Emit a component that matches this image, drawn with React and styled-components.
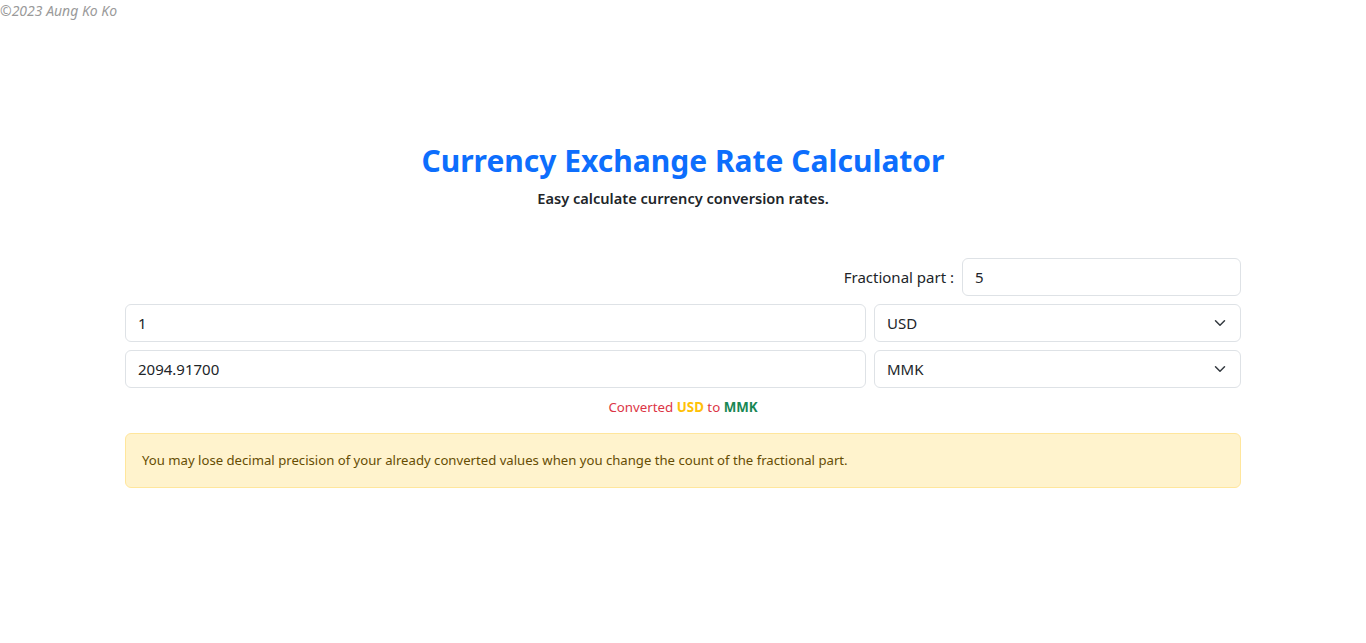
import React from "react";
import styled, { createGlobalStyle } from "styled-components";

const GlobalStyle = createGlobalStyle`
  * { box-sizing: border-box; }
  body {
    margin: 0;
    font-family: "Noto Sans", "Open Sans", sans-serif;
    color: #212529;
    background: #fff;
  }
`;

const Chevron = () => (
  <svg width="16" height="12" viewBox="0 0 16 16">
    <path
      d="M2 5l6 6 6-6"
      fill="none"
      stroke="#343a40"
      strokeWidth="2"
      strokeLinecap="round"
      strokeLinejoin="round"
    />
  </svg>
);

const App = () => {
  return (
    <Page>
      <GlobalStyle />
      <Copyright>©2023 Aung Ko Ko</Copyright>
      <Container>
        <Header>
          <Title>Currency Exchange Rate Calculator</Title>
          <Subtitle>Easy calculate currency conversion rates.</Subtitle>
        </Header>

        <Form>
          <FractionRow>
            <Label>Fractional part :</Label>
            <Field width="279px">5</Field>
          </FractionRow>
          <Row>
            <Field>1</Field>
            <Select>
              <span>USD</span>
              <Chevron />
            </Select>
          </Row>
          <Row>
            <Field>2094.91700</Field>
            <Select>
              <span>MMK</span>
              <Chevron />
            </Select>
          </Row>
        </Form>

        <Status>
          Converted <Code color="#ffc107">USD</Code> to{" "}
          <Code color="#198754">MMK</Code>
        </Status>

        <Alert>
          You may lose decimal precision of your already converted values when
          you change the count of the fractional part.
        </Alert>
      </Container>
    </Page>
  );
};

const Page = styled.div`
  min-height: 643px;
`;

const Copyright = styled.div`
  font-size: 14px;
  font-style: italic;
  color: #9a9a9a;
  line-height: 22px;
`;

const Container = styled.div`
  max-width: 1140px;
  margin: 0 auto;
  padding: 0 12px;
`;

const Header = styled.div`
  text-align: center;
  padding-top: 120px;
`;

const Title = styled.h2`
  margin: 0;
  font-size: 30px;
  line-height: 38px;
  font-weight: 700;
  color: #0d6efd;
`;

const Subtitle = styled.p`
  margin: 6px 0 0;
  font-size: 14.6px;
  line-height: 24px;
  font-weight: 600;
  color: #212529;
`;

const Form = styled.div`
  margin-top: 48px;
  display: flex;
  flex-direction: column;
  gap: 8px;
`;

const FractionRow = styled.div`
  display: flex;
  justify-content: flex-end;
  align-items: center;
  gap: 8px;
`;

const Label = styled.span`
  font-size: 15px;
`;

const Row = styled.div`
  display: grid;
  grid-template-columns: 741px 1fr;
  gap: 8px;
`;

const Field = styled.div`
  width: ${(p) => p.width || "auto"};
  height: 38px;
  padding: 0 12px;
  display: flex;
  align-items: center;
  font-size: 15px;
  border: 1px solid #dee2e6;
  border-radius: 6px;
  background: #fff;
`;

const Select = styled(Field)`
  justify-content: space-between;
  padding-right: 12px;
`;

const Status = styled.div`
  margin-top: 9px;
  text-align: center;
  font-size: 13.3px;
  line-height: 20px;
  color: #dc3545;
`;

const Code = styled.b`
  font-weight: 700;
  color: ${(p) => p.color};
`;

const Alert = styled.div`
  margin-top: 16px;
  padding: 16px;
  font-size: 13.15px;
  line-height: 21px;
  color: #664d03;
  background: #fff3cd;
  border: 1px solid #ffe69c;
  border-radius: 6px;
`;

export default App;
